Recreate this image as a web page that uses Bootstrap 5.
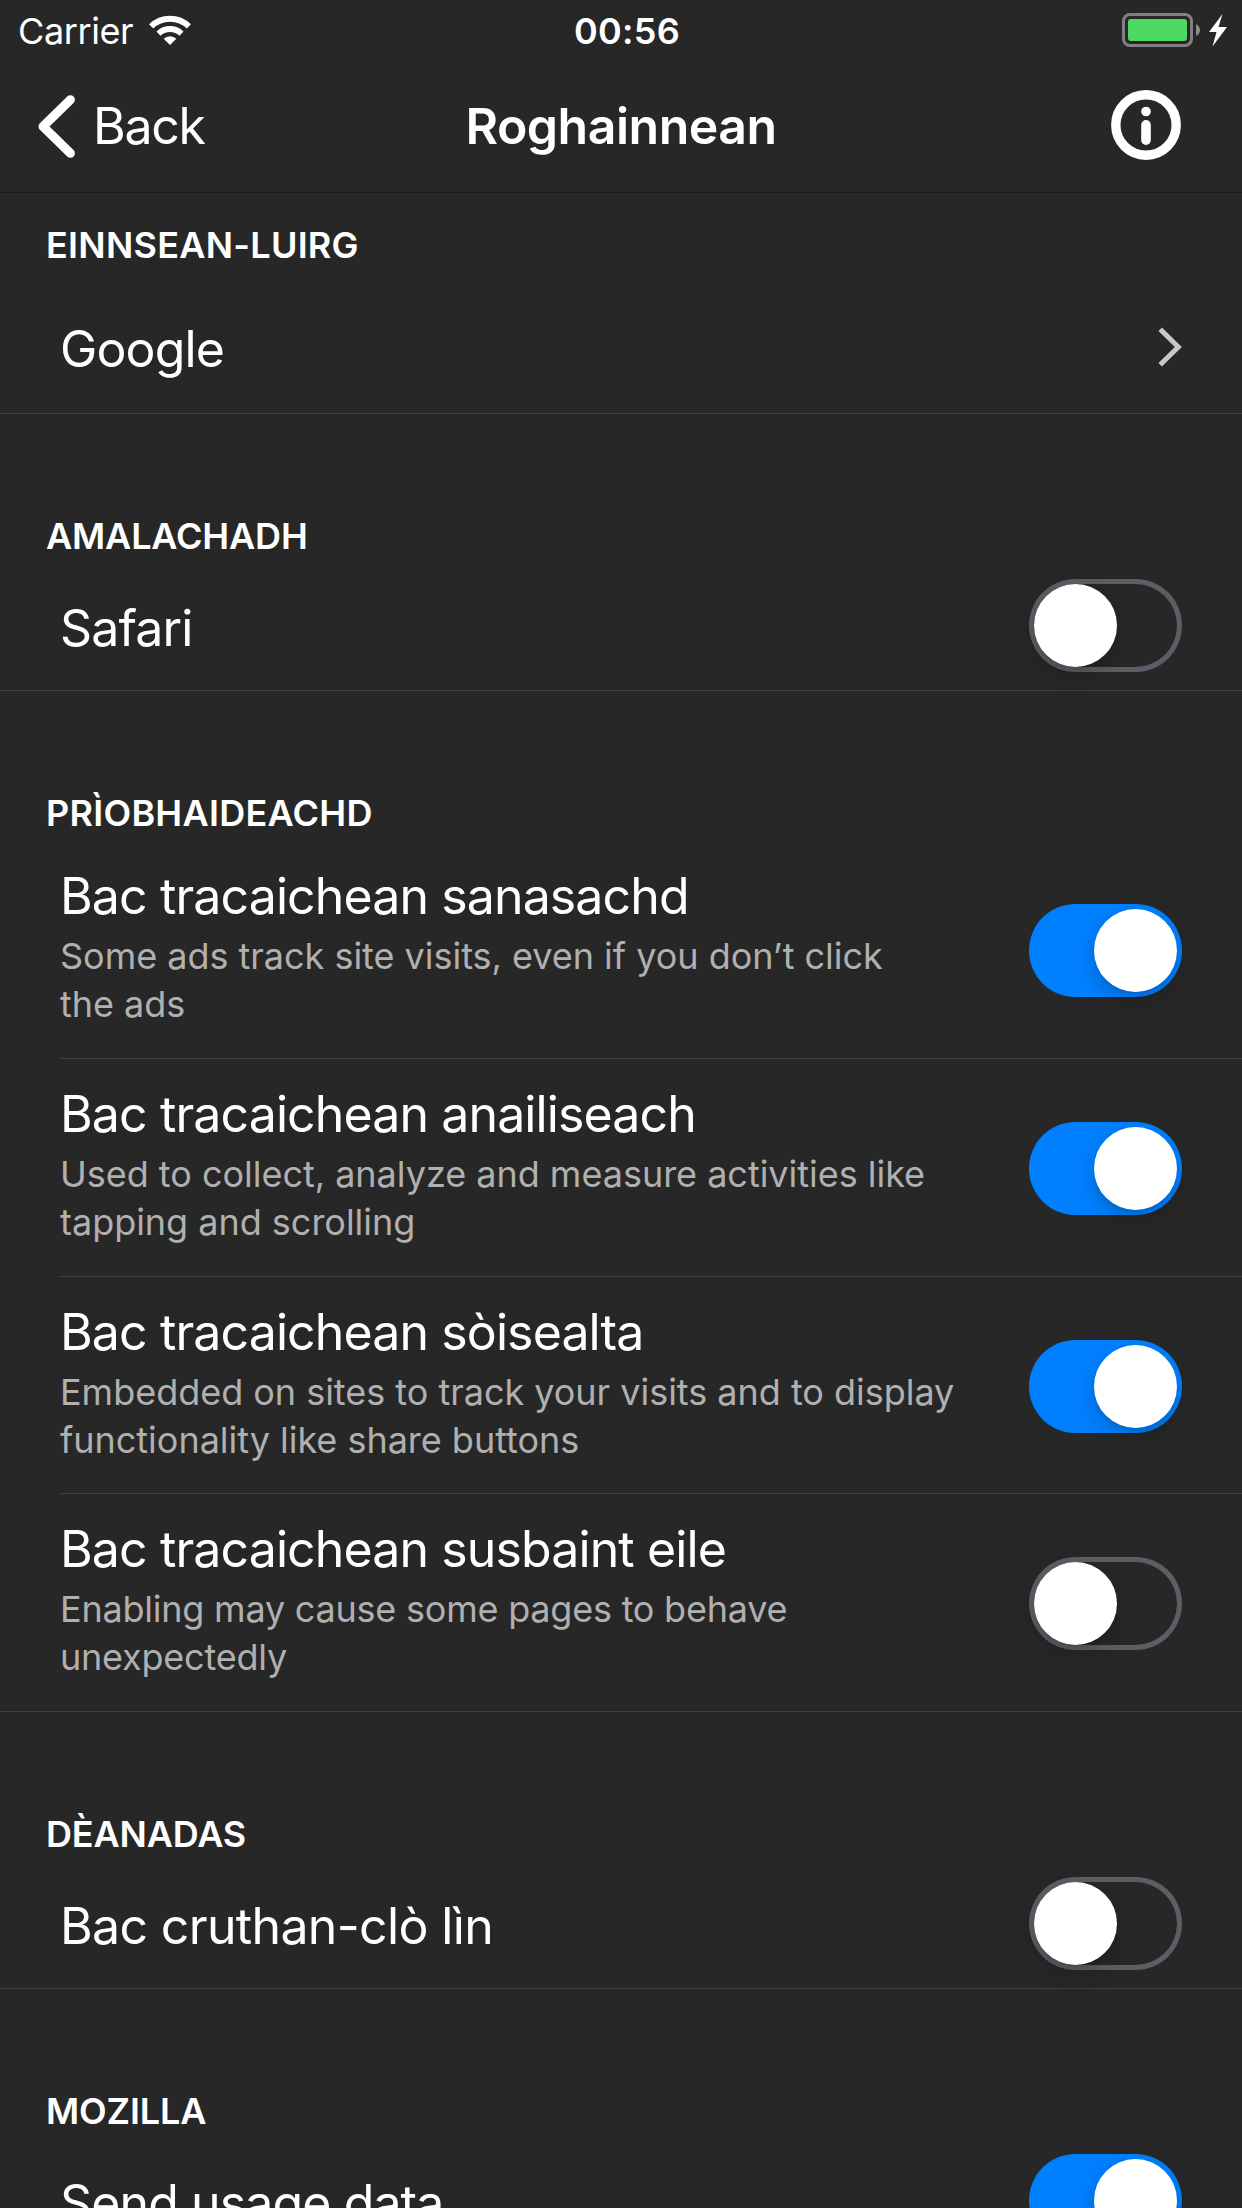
<!DOCTYPE html>
<html lang="gd" data-bs-theme="dark">
<head>
<meta charset="utf-8">
<meta name="viewport" content="width=device-width, initial-scale=1">
<title>Roghainnean</title>
<link href="https://cdn.jsdelivr.net/npm/bootstrap@5.3.0/dist/css/bootstrap.min.css" rel="stylesheet">
<style>
  body { background: #272727; color: #fff; font-family: Inter, "Liberation Sans", sans-serif; height: 2208px; overflow: hidden; }
  svg { display: block; flex: none; }

  /* Status bar */
  .status-bar { height: 60px; padding: 0 15px 0 18px; font-size: 36px; line-height: 60px; }
  .status-bar .side { flex: 1 1 0; }
  .carrier { letter-spacing: -.4px; margin-top: 2px; }
  .clock { font-weight: 600; margin-top: 2px; padding-left: 9px; letter-spacing: .3px; }

  /* Title bar */
  .title-bar { height: 133px; padding: 0 61px 0 38px; border-bottom: 1px solid #1c1c1c; font-size: 50px; line-height: 60px; }
  .title-bar .side { flex: 1 1 0; }
  .back-link { color: #fff; gap: 18px; letter-spacing: -1.3px; }
  .screen-title { font-size: 50px; font-weight: 600; line-height: 60px; letter-spacing: -.5px; padding-left: 23px; }
  .info-icon { margin-bottom: 2px; }

  /* Setting groups */
  .group-head { font-size: 36px; font-weight: 600; line-height: 44px; letter-spacing: .26px; padding: 100px 46px 0; margin: 0; }
  .group-head.first { padding-top: 30px; }
  .group-head.tight { letter-spacing: -.15px; }
  .setting { margin-left: 60px; padding-right: 60px; border-bottom: 1px solid #404042; }
  .setting.full { margin-left: 0; padding-left: 60px; }
  .choice { height: 147px; padding-top: 47px; padding-bottom: 34px; }
  .simple { height: 133px; padding-top: 21px; padding-bottom: 18px; }
  .detailed { height: 218px; padding-top: 25px; padding-bottom: 23px; }
  .detailed.lead-row { height: 224px; padding-top: 31px; }
  .detailed.short { height: 217px; padding-bottom: 22px; }
  .name { font-size: 50px; line-height: 60px; letter-spacing: -.88px; white-space: nowrap; }
  .name.wide { letter-spacing: -.65px; }
  .choice .name, .simple .name { padding-top: 5px; }
  .about { font-size: 36px; line-height: 48px; letter-spacing: -.02px; color: #b0b0b0; margin: 6px 0 7px; white-space: nowrap; }
  .about.snug { letter-spacing: -.22px; }

  /* Switches */
  .toggle { flex: none; display: flex; width: 153px; height: 93px; padding: 5px; border-radius: 47px; box-shadow: inset 0 0 0 5px #5a5f66; }
  .toggle::before { content: ""; width: 83px; height: 83px; border-radius: 50%; background: #fff; box-shadow: 0 8px 22px rgba(0,0,0,.2), 0 3px 3px rgba(0,0,0,.06); }
  .toggle.on { justify-content: flex-end; background: #0080ff; box-shadow: none; }
</style>
<script src="https://cdn.jsdelivr.net/npm/bootstrap@5.3.0/dist/js/bootstrap.bundle.min.js"></script>
</head>
<body>
<header>
  <div class="status-bar d-flex align-items-center">
    <div class="side d-flex align-items-center">
      <span class="carrier">Carrier</span>
      <svg class="ms-3" width="42" height="30" viewBox="0 0 42 30" fill="none" stroke="#fff">
        <path d="M2.2 11.3A27 27 0 0 1 39.8 11.3" stroke-width="6"/>
        <path d="M9.5 18.6A17 17 0 0 1 32.5 18.6" stroke-width="6"/>
        <path d="M14.7 23.7A9 9 0 0 1 27.3 23.7L21 30Z" fill="#fff" stroke="none"/>
      </svg>
    </div>
    <span class="clock">00:56</span>
    <div class="side d-flex justify-content-end">
      <svg width="105" height="34" viewBox="0 0 105 34">
        <rect x="1.5" y="1.5" width="68" height="31" rx="6.5" fill="none" stroke="#808080" stroke-width="3"/>
        <rect x="6" y="6" width="59" height="22" rx="3" fill="#4cd964"/>
        <path d="M74 11Q78 13 78 17T74 23Z" fill="#8c8c8c"/>
        <path d="M100.5 1L87 19H94.5L90.5 33.5L105 14H96.5Z" fill="#fff"/>
      </svg>
    </div>
  </div>
  <nav class="title-bar d-flex align-items-center">
    <div class="side d-flex">
      <a class="back-link d-flex align-items-center text-decoration-none" href="#">
        <svg width="37" height="63" viewBox="0 0 37 63" fill="none" stroke="#fff" stroke-width="9" stroke-linecap="round" stroke-linejoin="round"><path d="M32.4 4.7L5 31.5L32.4 58.3"/></svg>
        <span>Back</span>
      </a>
    </div>
    <h1 class="screen-title mb-0">Roghainnean</h1>
    <div class="side d-flex justify-content-end">
      <svg class="info-icon" width="70" height="70" viewBox="0 0 70 70">
        <circle cx="35" cy="35" r="30.2" fill="none" stroke="#fff" stroke-width="9.4"/>
        <circle cx="35" cy="21.5" r="4.8" fill="#fff"/>
        <rect x="30.2" y="30" width="9.6" height="25" rx="4.8" fill="#fff"/>
      </svg>
    </div>
  </nav>
</header>

<main>
  <section>
    <h2 class="group-head first">EINNSEAN-LUIRG</h2>
    <div class="setting full choice d-flex align-items-center justify-content-between">
      <div class="name">Google</div>
      <svg width="24" height="40" viewBox="0 0 24 40" fill="none" stroke="#c7c7cc" stroke-width="5"><path d="M2.2 2.3L20.3 20L2.2 37.7"/></svg>
    </div>
  </section>

  <section>
    <h2 class="group-head tight">AMALACHADH</h2>
    <div class="setting full simple d-flex align-items-center justify-content-between">
      <div class="name">Safari</div>
      <span class="toggle" role="switch" aria-checked="false"></span>
    </div>
  </section>

  <section>
    <h2 class="group-head">PRÌOBHAIDEACHD</h2>
    <div class="setting detailed lead-row d-flex align-items-center justify-content-between">
      <div>
        <div class="name">Bac tracaichean sanasachd</div>
        <p class="about">Some ads track site visits, even if you don’t click<br>the ads</p>
      </div>
      <span class="toggle on" role="switch" aria-checked="true"></span>
    </div>
    <div class="setting detailed d-flex align-items-center justify-content-between">
      <div>
        <div class="name">Bac tracaichean anailiseach</div>
        <p class="about">Used to collect, analyze and measure activities like<br>tapping and scrolling</p>
      </div>
      <span class="toggle on" role="switch" aria-checked="true"></span>
    </div>
    <div class="setting detailed short d-flex align-items-center justify-content-between">
      <div>
        <div class="name">Bac tracaichean sòisealta</div>
        <p class="about">Embedded on sites to track your visits and to display<br>functionality like share buttons</p>
      </div>
      <span class="toggle on" role="switch" aria-checked="true"></span>
    </div>
    <div class="setting full detailed d-flex align-items-center justify-content-between">
      <div>
        <div class="name">Bac tracaichean susbaint eile</div>
        <p class="about snug">Enabling may cause some pages to behave<br>unexpectedly</p>
      </div>
      <span class="toggle" role="switch" aria-checked="false"></span>
    </div>
  </section>

  <section>
    <h2 class="group-head tight">DÈANADAS</h2>
    <div class="setting full simple d-flex align-items-center justify-content-between">
      <div class="name wide">Bac cruthan-clò lìn</div>
      <span class="toggle" role="switch" aria-checked="false"></span>
    </div>
  </section>

  <section>
    <h2 class="group-head tight">MOZILLA</h2>
    <div class="setting full simple d-flex align-items-center justify-content-between">
      <div class="name">Send usage data</div>
      <span class="toggle on" role="switch" aria-checked="true"></span>
    </div>
  </section>
</main>
</body>
</html>
